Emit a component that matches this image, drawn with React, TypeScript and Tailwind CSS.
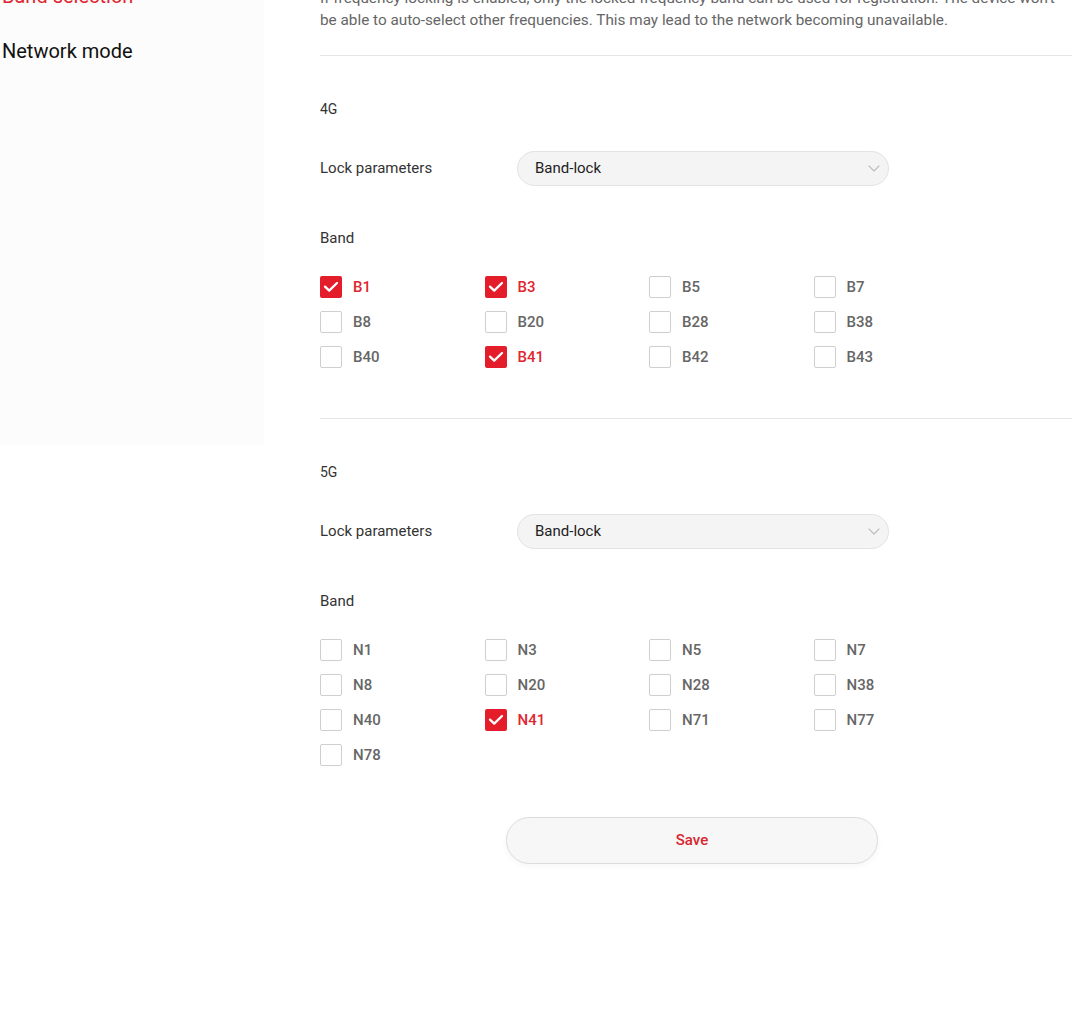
type Band = { name: string; checked: boolean }

const lteBands: Band[] = [
  { name: 'B1', checked: true },
  { name: 'B3', checked: true },
  { name: 'B5', checked: false },
  { name: 'B7', checked: false },
  { name: 'B8', checked: false },
  { name: 'B20', checked: false },
  { name: 'B28', checked: false },
  { name: 'B38', checked: false },
  { name: 'B40', checked: false },
  { name: 'B41', checked: true },
  { name: 'B42', checked: false },
  { name: 'B43', checked: false },
]

const nrBands: Band[] = [
  { name: 'N1', checked: false },
  { name: 'N3', checked: false },
  { name: 'N5', checked: false },
  { name: 'N7', checked: false },
  { name: 'N8', checked: false },
  { name: 'N20', checked: false },
  { name: 'N28', checked: false },
  { name: 'N38', checked: false },
  { name: 'N40', checked: false },
  { name: 'N41', checked: true },
  { name: 'N71', checked: false },
  { name: 'N77', checked: false },
  { name: 'N78', checked: false },
]

function Checkbox({ band }: { band: Band }) {
  return (
    <label className="flex h-[22px] items-center gap-[11px]">
      {band.checked ? (
        <span className="flex h-[22px] w-[22px] items-center justify-center rounded-[2px] bg-[#e31d2a]">
          <svg width="16" height="12" viewBox="0 0 16 12" fill="none">
            <path d="M2 5.6 6.2 9.6 14 2" stroke="#fff" strokeWidth="2.3" strokeLinecap="round" strokeLinejoin="round" />
          </svg>
        </span>
      ) : (
        <span className="h-[22px] w-[22px] rounded-[2px] border border-[#cfcfcf] bg-white" />
      )}
      <span className={`text-[15px] font-medium ${band.checked ? 'text-[#e02630]' : 'text-[#666]'}`}>{band.name}</span>
    </label>
  )
}

function BandSection({ title, bands }: { title: string; bands: Band[] }) {
  return (
    <section>
      <h3 className="text-[14px] leading-5 text-[#333]">{title}</h3>

      <div className="mt-8 flex items-center">
        <span className="w-[197px] text-[15px] text-[#333]">Lock parameters</span>
        <div className="flex h-[35px] w-[372px] items-center justify-between rounded-full border border-[#e3e3e3] bg-[#f4f4f4] pl-[17px] pr-[8px]">
          <span className="text-[15px] text-[#222]">Band-lock</span>
          <svg width="12" height="7" viewBox="0 0 12 7" fill="none">
            <path d="M1 1 6 6 11 1" stroke="#bdbdbd" strokeWidth="1.1" strokeLinecap="round" strokeLinejoin="round" />
          </svg>
        </div>
      </div>

      <h4 className="mt-[42px] text-[15px] leading-5 text-[#333]">Band</h4>

      <div className="mt-[28px] grid grid-cols-[repeat(4,164.5px)] gap-y-[13px]">
        {bands.map(b => (
          <Checkbox key={b.name} band={b} />
        ))}
      </div>
    </section>
  )
}

export default function App() {
  return (
    <div className="h-[1012px] overflow-hidden bg-white font-['Roboto',sans-serif]">
      <div className="-mt-[40px] flex">
        {/* Side navigation */}
        <nav className="h-[485px] w-[264px] shrink-0 bg-[#fcfcfc] pt-[22px]">
          <div className="pl-[2px] text-[20px] leading-7 text-[#e02630]">Band selection</div>
          <div className="mt-[27px] pl-[2px] text-[20px] leading-7 text-[#111]">Network mode</div>
        </nav>

        <main className="ml-[56px] flex-1 pt-[27px]">
          <p className="whitespace-nowrap text-[15.3px] leading-[22px] text-[#666]">
            If frequency locking is enabled, only the locked frequency band can be used for registration. The device won't
            <br />
            be able to auto-select other frequencies. This may lead to the network becoming unavailable.
          </p>

          <div className="mt-6 h-px bg-[#e6e6e6]" />

          <div className="mt-[43px]">
            <BandSection title="4G" bands={lteBands} />
          </div>

          <div className="mt-[50px] h-px bg-[#e6e6e6]" />

          <div className="mt-[43px]">
            <BandSection title="5G" bands={nrBands} />
          </div>

          <button className="ml-[186px] mt-[51px] flex h-[47px] w-[372px] items-center justify-center rounded-full border border-[#dcdcdc] bg-[#f7f7f7] text-[15px] font-medium text-[#d9262f] shadow-[0_2px_6px_rgba(0,0,0,0.04)]">
            Save
          </button>
        </main>
      </div>
    </div>
  )
}
